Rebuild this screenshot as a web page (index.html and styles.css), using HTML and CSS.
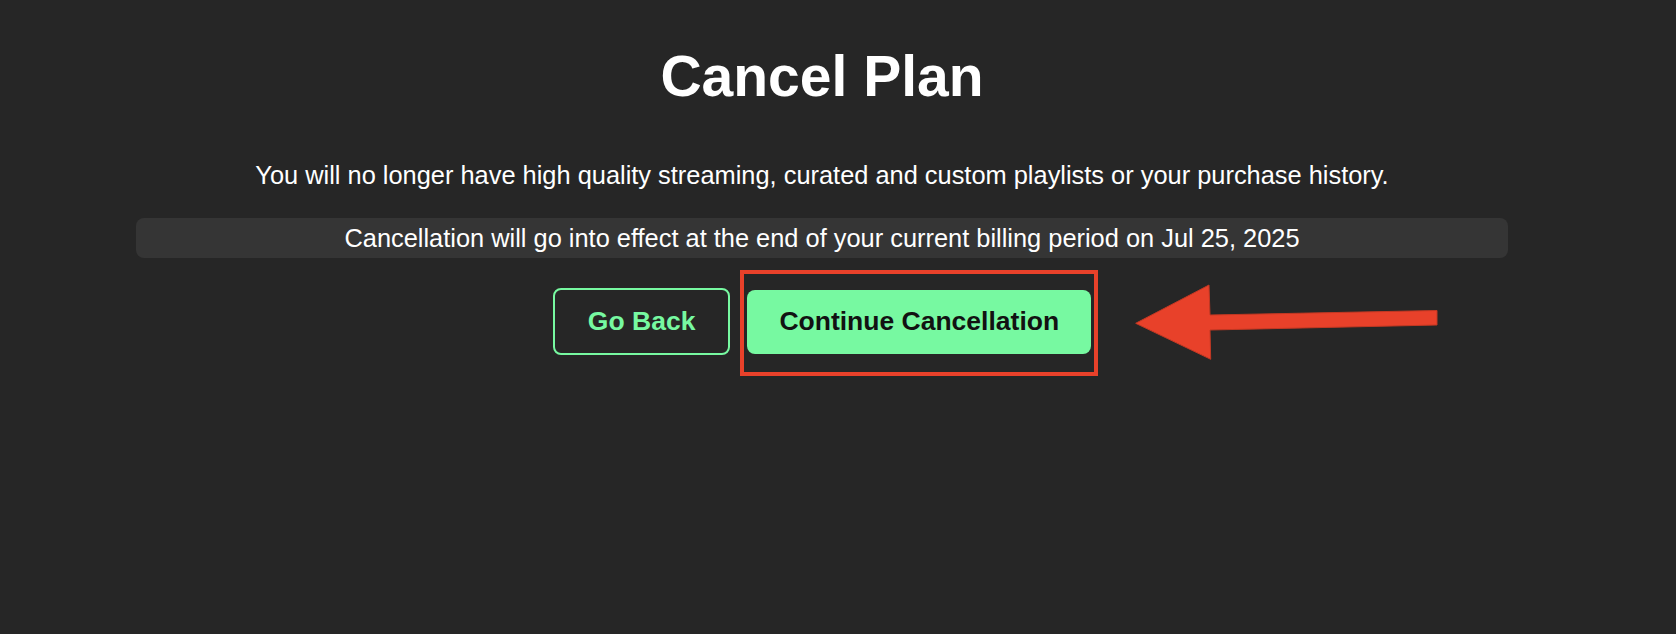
FILE: index.html
```html
<!DOCTYPE html>
<html lang="en">
<head>
    <meta charset="UTF-8">
    <meta name="viewport" content="width=device-width, initial-scale=1.0">
    <title>Cancel Plan</title>
    <link rel="stylesheet" href="styles.css">
</head>
<body>
    <main class="cancel">
        <h1 class="cancel-title">Cancel Plan</h1>
        <p class="cancel-note">You will no longer have high quality streaming, curated and custom playlists or your purchase history.</p>
        <p class="cancel-period">Cancellation will go into effect at the end of your current billing period on Jul 25, 2025</p>

        <div class="cancel-actions">
            <button class="btn btn-outline" type="button">Go Back</button>
            <span class="highlight">
                <button class="btn btn-primary" type="button">Continue Cancellation</button>
            </span>
        </div>
    </main>

    <!-- annotation arrow pointing at the highlighted button -->
    <svg class="annotation-arrow" width="312" height="85" viewBox="0 0 312 85" aria-hidden="true">
        <polygon points="5.7,43.3 79,5 80,35 307,30.5 307,45 80,50 80.7,79.3"
                 fill="#e8412a" stroke="#c23823" stroke-width="1" stroke-linejoin="miter"/>
    </svg>
</body>
</html>
```

FILE: styles.css
```css
:root {
    --bg-color: #262626;
    --panel-bg: #353535;
    --text-color: #ffffff;
    --accent: #77f9a1;
    --accent-text: #121212;
    --annotation: #e8412a;
}

body {
    margin: 0;
    background-color: var(--bg-color);
    color: var(--text-color);
    font-family: 'Liberation Sans', Arial, sans-serif;
    min-height: 100vh;
}

.cancel {
    padding: 42px 168px 0 136px;
    text-align: center;
}

.cancel-title {
    margin: 0;
    font-size: 57px;
    line-height: 1.2;
    font-weight: bold;
}

.cancel-note {
    margin: 50px 0 0;
    font-size: 25.4px;
    line-height: 30px;
}

.cancel-period {
    margin: 28px 0 0;
    background-color: var(--panel-bg);
    border-radius: 8px;
    font-size: 25.4px;
    line-height: 40px;
}

.cancel-actions {
    margin-top: 30px;
    display: flex;
    justify-content: center;
    align-items: center;
    gap: 17px;
}

.btn {
    font-family: inherit;
    font-size: 26.5px;
    font-weight: bold;
    border-radius: 8px;
    cursor: pointer;
}

.btn-outline {
    height: 67px;
    padding: 0 33px;
    background: transparent;
    color: var(--accent);
    border: 2px solid var(--accent);
}

.btn-primary {
    display: block;
    height: 64px;
    padding: 0 32px;
    background-color: var(--accent);
    color: var(--accent-text);
    border: none;
}

/* red box drawn around the button */
.highlight {
    position: relative;
    display: block;
}

.highlight::after {
    content: '';
    position: absolute;
    top: -20px;
    bottom: -22px;
    left: -7px;
    right: -7px;
    border: 4px solid var(--annotation);
    pointer-events: none;
}

.annotation-arrow {
    position: absolute;
    left: 1130px;
    top: 280px;
}
```
